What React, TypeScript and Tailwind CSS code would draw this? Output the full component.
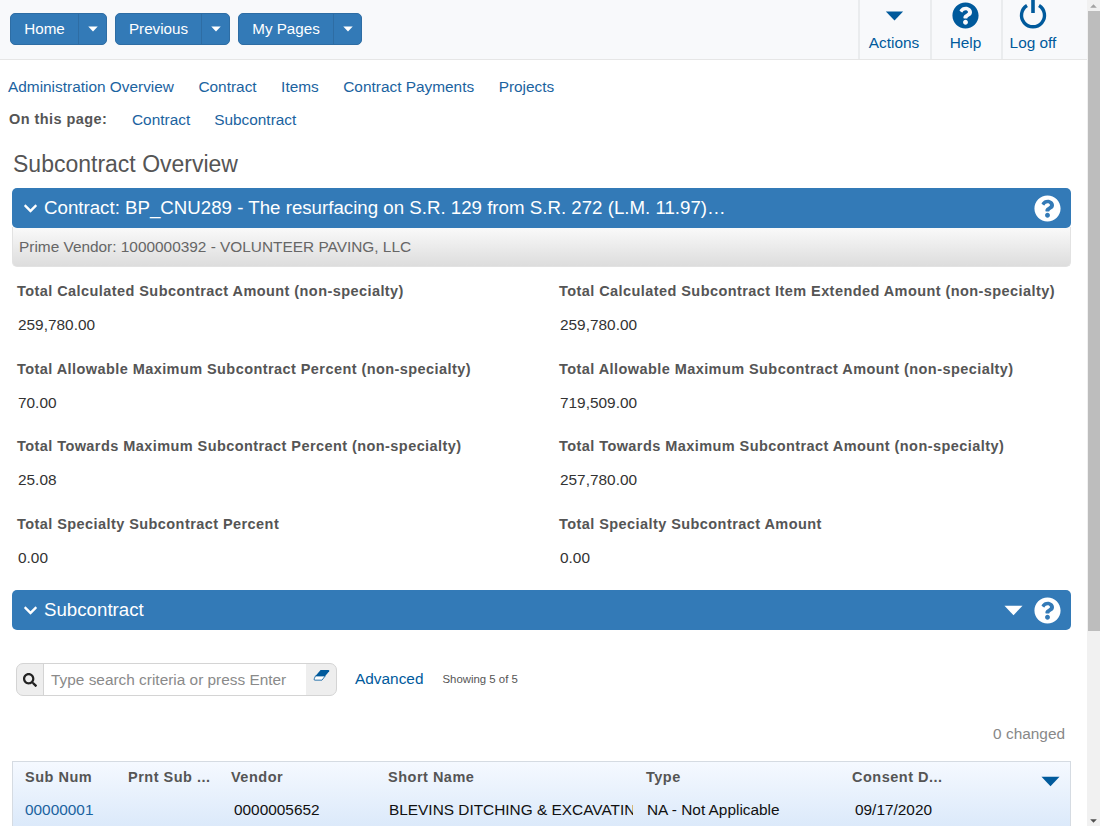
import React from 'react';
import { FaChevronDown, FaQuestionCircle, FaSearch } from 'react-icons/fa';

const Caret = ({ className = '' }: { className?: string }) => (
  <svg viewBox="0 0 20 11" className={className} fill="currentColor">
    <path d="M0.5 0.5h19L10 10.5z" />
  </svg>
);

const SplitButton = ({ label, mainW }: { label: string; mainW: string }) => (
  <div className="flex h-8 rounded-[5px] bg-[#337ab7] border border-[#2e6da4] text-white">
    <span className={`${mainW} flex items-center justify-center border-r border-[#2e6da4] text-[15.2px]`}>{label}</span>
    <span className="w-[27px] flex items-center justify-center">
      <Caret className="w-[10px] h-[6px]" />
    </span>
  </div>
);

const HeaderAction = ({ label, width, labelClass = '', children }: { label: string; width: string; labelClass?: string; children: React.ReactNode }) => (
  <div className={`${width} h-full border-l-2 border-[#eaecee] pr-[2px] flex flex-col items-center text-[#005a9c]`}>
    <div className="h-[33px] flex items-center justify-center">{children}</div>
    <span className={`leading-[20px] ${labelClass}`}>{label}</span>
  </div>
);

const Stat = ({ label, value }: { label: string; value: string }) => (
  <div className="h-[77.5px]">
    <div className="h-[34px] flex items-center font-bold text-[14.5px] tracking-[0.43px] text-[#555] pl-[5px]">{label}</div>
    <div className="h-[32px] flex items-center text-[#333] pl-[6px]">{value}</div>
  </div>
);

const stats = [
  ['Total Calculated Subcontract Amount (non-specialty)', '259,780.00', 'Total Calculated Subcontract Item Extended Amount (non-specialty)', '259,780.00'],
  ['Total Allowable Maximum Subcontract Percent (non-specialty)', '70.00', 'Total Allowable Maximum Subcontract Amount (non-specialty)', '719,509.00'],
  ['Total Towards Maximum Subcontract Percent (non-specialty)', '25.08', 'Total Towards Maximum Subcontract Amount (non-specialty)', '257,780.00'],
  ['Total Specialty Subcontract Percent', '0.00', 'Total Specialty Subcontract Amount', '0.00'],
];

const columns = [
  { name: 'Sub Num', w: 'w-[103px]' },
  { name: 'Prnt Sub ...', w: 'w-[103px]' },
  { name: 'Vendor', w: 'w-[157px]' },
  { name: 'Short Name', w: 'w-[258px]' },
  { name: 'Type', w: 'w-[206px]' },
  { name: 'Consent D...', w: 'w-[100px]' },
];

export default function App() {
  return (
    <div className="flex h-[826px] w-[1100px] overflow-hidden bg-white text-[15.4px] font-['Liberation_Sans',Arial,sans-serif]">
      <div className="w-[1087px] shrink-0">
        <header className="h-[60px] bg-[#f8f9fb] border-b border-[#e6e6e6] flex items-start justify-between">
          <div className="flex gap-2 pl-[10px] pt-[13px]">
            <SplitButton label="Home" mainW="w-[68px]" />
            <SplitButton label="Previous" mainW="w-[86px]" />
            <SplitButton label="My Pages" mainW="w-[95px]" />
          </div>
          <div className="flex h-full">
            <HeaderAction label="Actions" width="w-[72px]">
              <Caret className="w-[19px] h-[10px] mt-[-2px]" />
            </HeaderAction>
            <HeaderAction label="Help" width="w-[71px]">
              <FaQuestionCircle size={27} className="mt-[-3px]" />
            </HeaderAction>
            <HeaderAction label="Log off" width="w-[86px]" labelClass="mr-[22px]">
              <svg viewBox="0 0 28 30" className="w-[28px] h-[30px] mt-[-6px] mr-[22px]" fill="none" stroke="currentColor" strokeWidth="3.4">
                <path d="M8 6.5a11.5 11.5 0 1 0 12 0" />
                <path d="M14 0v14" strokeWidth="3.6" />
              </svg>
            </HeaderAction>
          </div>
        </header>

        <nav className="flex gap-[24.5px] pl-2 h-[33px] pt-[10.5px] items-center text-[#1b639f] box-content">
          <span>Administration Overview</span>
          <span>Contract</span>
          <span>Items</span>
          <span>Contract Payments</span>
          <span>Projects</span>
        </nav>
        <div className="flex items-center h-[33px] mt-[-10.5px] pt-[10px] box-content pl-[9px] text-[#1b639f]">
          <span className="font-bold text-[14.5px] tracking-[0.43px] text-[#555] w-[123px]">On this page:</span>
          <span className="mr-[24px]">Contract</span>
          <span>Subcontract</span>
        </div>

        <h1 className="text-[23px] leading-[30px] text-[#555] pl-[13px] mt-[13px] mb-[9px]">Subcontract Overview</h1>

        <section className="mx-3 w-[1059px]">
          <div className="h-10 rounded-[5px] bg-[#337ab7] text-white flex items-center pl-[12px] pr-[10px] text-[18.7px] relative z-10">
            <FaChevronDown size={15} className="mr-[6px] -ml-px" />
            <span className="whitespace-nowrap">Contract: BP_CNU289 - The resurfacing on S.R. 129 from S.R. 272 (L.M. 11.97)…</span>
            <FaQuestionCircle size={27} className="ml-auto" />
          </div>
          <div className="h-[40px] mt-[-1px] rounded-b-[5px] border-x border-b border-[#e2e2e2] bg-gradient-to-b from-[#fafafa] to-[#dddddd] flex items-center pl-[6px] text-[#666]">
            Prime Vendor: 1000000392 - VOLUNTEER PAVING, LLC
          </div>
        </section>

        <div className="grid grid-cols-[542px_1fr] pl-3 mt-2">
          {stats.map(([a, b, c, d]) => (
            <React.Fragment key={a}>
              <Stat label={a} value={b} />
              <Stat label={c} value={d} />
            </React.Fragment>
          ))}
        </div>

        <section className="mx-3 w-[1059px] mt-[5px] h-10 rounded-[5px] bg-[#337ab7] text-white flex items-center pl-[12px] pr-[10px] text-[18.7px]">
          <FaChevronDown size={15} className="mr-[6px] -ml-px" />
          <span>Subcontract</span>
          <Caret className="ml-auto mr-[11px] w-[19px] h-[11px]" />
          <FaQuestionCircle size={27} />
        </section>

        <div className="flex items-center pl-4 mt-[33px] h-[33px]">
          <div className="w-[321px] h-[33px] rounded-[7px] border border-[#d4d4d4] bg-[#eee] flex overflow-hidden">
            <span className="w-[27px] flex items-center justify-center border-r border-[#d4d4d4] text-[#222]">
              <FaSearch size={14} />
            </span>
            <span className="w-[262px] bg-white flex items-center pl-[7px] text-[#8a8a8a] whitespace-nowrap">Type search criteria or press Enter</span>
            <span className="flex-1 flex items-start justify-center pt-[5px] text-[#005a9c]">
              <svg viewBox="0 0 18 14" className="w-[17px] h-[13px]">
                <path d="M8 1h8.5a1 1 0 0 1 .8 1.5L13 7.5H2.5z" fill="currentColor" />
                <path d="M2.5 7.5H13l-3.5 4.5H2a1 1 0 0 1-.8-1.5z" fill="#fff" stroke="currentColor" strokeWidth="0.9" />
              </svg>
            </span>
          </div>
          <span className="ml-[18px] text-[#005a9c] mt-[-2px]">Advanced</span>
          <span className="ml-[19px] text-[11.4px] text-[#555]">Showing 5 of 5</span>
        </div>

        <div className="h-[65px] pt-[11px] flex items-center justify-end pr-[22px] text-[#888]">0 changed</div>

        <div className="mx-3 w-[1059px] h-[80px] border border-[#d5dbe2] bg-gradient-to-b from-[#f5f9ff] to-[#d6e6f9]">
          <div className="flex h-[31px] items-center pl-3 font-bold text-[14.5px] tracking-[0.5px] text-[#555]">
            {columns.map((c) => (
              <span key={c.name} className={`${c.w} shrink-0 whitespace-nowrap`}>{c.name}</span>
            ))}
            <Caret className="ml-[89px] mt-[7px] w-[19px] h-[11px] text-[#005a9c]" />
          </div>
          <div className="flex h-[34px] items-center pl-3 text-[#111]">
            <span className="w-[103px] shrink-0 text-[#1b639f]">00000001</span>
            <span className="w-[106px] shrink-0" />
            <span className="w-[155px] shrink-0">0000005652</span>
            <span className="w-[244px] shrink-0 overflow-hidden whitespace-nowrap mr-[14px]">BLEVINS DITCHING &amp; EXCAVATIN</span>
            <span className="w-[208px] shrink-0">NA - Not Applicable</span>
            <span>09/17/2020</span>
          </div>
        </div>
      </div>

      <aside className="w-[13px] bg-[#f1f1f1] flex flex-col items-center relative">
        <div className="h-[11px] flex items-center justify-center text-[#a3a3a3]">
          <Caret className="w-[7px] h-[4px] rotate-180" />
        </div>
        <div className="w-full h-[620px] bg-[#bdbdbd] ml-[1px]" />
        <Caret className="absolute bottom-[3px] w-[7px] h-[4px] text-[#505050]" />
      </aside>
    </div>
  );
}
